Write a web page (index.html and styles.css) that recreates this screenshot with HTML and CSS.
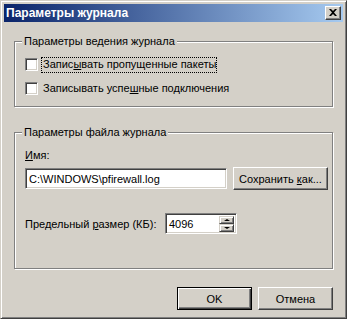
FILE: index.html
```html
<!DOCTYPE html>
<html lang="ru">
<head>
    <meta charset="UTF-8">
    <title>Параметры журнала</title>
    <link rel="stylesheet" href="styles.css">
</head>
<body>
    <div class="window">
        <!-- заголовок окна -->
        <div class="titlebar">
            <span class="title">Параметры журнала</span>
            <span class="close">
                <svg width="8" height="7" viewBox="0 0 8 7"><path d="M0 0h2l2 2 2-2h2L5 3.5 8 7H6L4 5 2 7H0l3-3.5z" fill="#000"/></svg>
            </span>
        </div>

        <div class="content">
            <!-- параметры ведения журнала -->
            <div class="group group-log">
                <div class="group-title">Параметры ведения журнала</div>
                <div class="check check-first">
                    <span class="box"></span>
                    <span class="label focus">Запис<u>ы</u>вать пропущенные пакеты</span>
                </div>
                <div class="check">
                    <span class="box"></span>
                    <span class="label">Записывать успе<u>ш</u>ные подключения</span>
                </div>
            </div>

            <!-- параметры файла журнала -->
            <div class="group group-file">
                <div class="group-title">Параметры файла журнала</div>
                <div class="field-label"><u>И</u>мя:</div>
                <div class="file-row">
                    <div class="edit edit-path">C:\WINDOWS\pfirewall.log</div>
                    <button class="btn btn-save">Сохранить <u>к</u>ак...</button>
                </div>
                <div class="size-row">
                    <span class="size-label">Предельный <u>р</u>азмер (КБ):</span>
                    <div class="edit edit-size">
                        <span>4096</span>
                        <div class="spin">
                            <span class="spin-btn"><i class="arrow-up"></i></span>
                            <span class="spin-btn"><i class="arrow-down"></i></span>
                        </div>
                    </div>
                </div>
            </div>

            <div class="buttons">
                <button class="btn btn-default">OK</button>
                <button class="btn">Отмена</button>
            </div>
        </div>
    </div>
</body>
</html>
```

FILE: styles.css
```css
* {
    margin: 0;
    padding: 0;
    box-sizing: border-box;
}

body {
    background-color: #d4d0c8;
    font-family: "Liberation Sans", "DejaVu Sans", sans-serif;
    font-size: 11px;
    color: #000;
}

u {
    text-decoration: underline;
    text-underline-offset: 1px;
}

/* рамка окна */
.window {
    width: 347px;
    height: 319px;
    border: 1px solid;
    border-color: #d4d0c8 #404040 #404040 #d4d0c8;
    box-shadow: inset 1px 1px #fff, inset -1px -1px #808080;
    padding: 3px;
}

.titlebar {
    height: 18px;
    background: linear-gradient(to right, #0a246a, #a6caf0);
    display: flex;
    align-items: center;
    justify-content: space-between;
    padding: 0 2px 0 2px;
}

.title {
    color: #fff;
    font-weight: bold;
    font-size: 12px;
}

.close {
    width: 16px;
    height: 14px;
    background-color: #d4d0c8;
    border: 1px solid;
    border-color: #fff #404040 #404040 #fff;
    box-shadow: inset -1px -1px #808080;
    display: flex;
    align-items: center;
    justify-content: center;
    padding-bottom: 1px;
}

.content {
    padding: 19px 10px 0 10px;
}

/* групповая рамка */
.group {
    width: 319px;
    border: 1px solid #808080;
    box-shadow: inset 1px 1px #fff, 1px 1px #fff;
}

.group-log {
    height: 66px;
}

.group-file {
    height: 137px;
    margin-top: 25px;
}

.group-title {
    width: fit-content;
    margin: -7px 0 0 7px;
    padding: 0 2px;
    line-height: 13px;
    background-color: #d4d0c8;
}

.check {
    display: flex;
    align-items: center;
    height: 17px;
    margin-left: 10px;
}

.check-first {
    margin-top: 8px;
}

.check + .check {
    margin-top: 7px;
}

.box {
    width: 13px;
    height: 13px;
    background-color: #fff;
    border: 1px solid;
    border-color: #808080 #fff #fff #808080;
    box-shadow: inset 1px 1px #404040, inset -1px -1px #d4d0c8;
    margin-right: 3px;
}

.label {
    padding: 1px 1px 2px 2px;
    line-height: 13px;
}

.focus {
    outline: 1px dotted #000;
    outline-offset: -1px;
}

.field-label {
    margin: 10px 0 0 10px;
    line-height: 13px;
}

.file-row {
    display: flex;
    align-items: center;
    margin: 5px 0 0 10px;
}

.edit {
    height: 21px;
    background-color: #fff;
    border: 1px solid;
    border-color: #808080 #fff #fff #808080;
    box-shadow: inset 1px 1px #404040, inset -1px -1px #d4d0c8;
    padding: 0 3px;
    display: flex;
    align-items: center;
}

.edit-path {
    width: 202px;
}

.btn {
    font-family: inherit;
    font-size: 11px;
    height: 23px;
    background-color: #d4d0c8;
    border: 1px solid;
    border-color: #fff #404040 #404040 #fff;
    box-shadow: inset -1px -1px #808080;
}

.btn-save {
    width: 95px;
    margin-left: 6px;
}

.size-row {
    display: flex;
    align-items: center;
    margin: 23px 0 0 10px;
}

.size-label {
    width: 140px;
}

.edit-size {
    width: 72px;
    justify-content: space-between;
    padding-right: 2px;
}

.spin {
    display: flex;
    flex-direction: column;
}

.spin-btn {
    width: 15px;
    height: 8px;
    background-color: #d4d0c8;
    border: 1px solid;
    border-color: #d4d0c8 #404040 #404040 #d4d0c8;
    box-shadow: inset 1px 1px #fff, inset -1px -1px #808080;
    display: flex;
    align-items: center;
    justify-content: center;
}

.arrow-up {
    border: 3px solid transparent;
    border-top: none;
    border-bottom: 2px solid #000;
}

.arrow-down {
    border: 3px solid transparent;
    border-bottom: none;
    border-top: 2px solid #000;
}

.buttons {
    display: flex;
    justify-content: flex-end;
    gap: 6px;
    width: 319px;
    margin-top: 18px;
}

.buttons .btn {
    width: 75px;
}

.btn-default {
    border: 1px solid #000;
    box-shadow: inset 1px 1px #fff, inset -1px -1px #404040, inset -2px -2px #808080;
}
```
